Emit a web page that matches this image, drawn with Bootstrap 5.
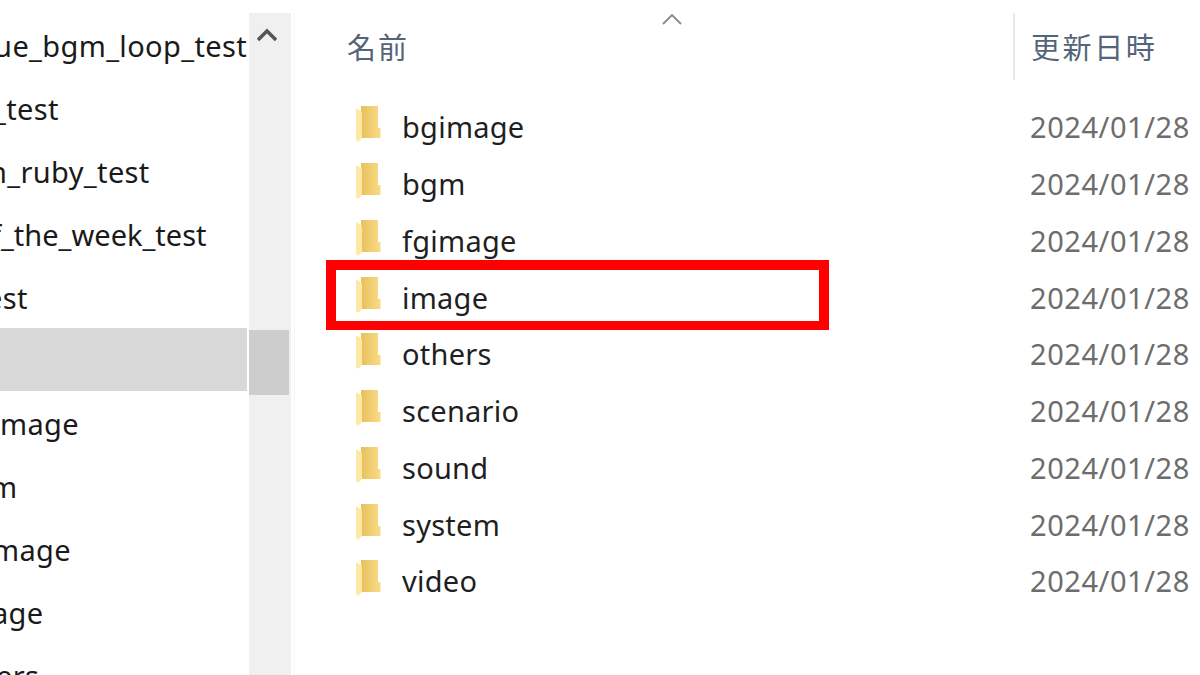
<!DOCTYPE html>
<html lang="ja">
<head>
<meta charset="utf-8">
<title>Explorer</title>
<link href="https://cdn.jsdelivr.net/npm/bootstrap@5.3.0/dist/css/bootstrap.min.css" rel="stylesheet">
<style>
html,body{height:675px;overflow:hidden;background:#fff}
body{font-family:"Noto Sans","Noto Sans CJK JP",sans-serif}
.shell{height:675px}
.tree{width:247px;padding-top:13px;overflow:hidden;flex:none}
.tree-row{height:63px;line-height:65px;font-size:29px;letter-spacing:.35px;color:#1a1a1a;white-space:nowrap;display:flex;justify-content:flex-end}
.tree-row.left-cut{justify-content:flex-start}
.tree-row.picked{background:#d9d9d9}
.cut-1{margin-left:-7px}.cut-2{margin-left:-11px}.cut-3{margin-left:-9px;letter-spacing:0}.cut-4{margin-left:-14px}
.cut-5{margin-left:0}.cut-6{margin-left:-10px}.cut-7{margin-left:-8px}.cut-8{margin-left:-8px}.cut-9{margin-left:-4px}
.scroll-track{width:42px;margin:13px 0 0 2px;background:#f0f0f0;flex:none;position:relative;display:flex;flex-direction:column}
.scroll-arrow{height:47px;padding:15px 0 0 8px;line-height:0}
.scroll-thumb{width:40px;height:65px;margin-top:270px;background:#cdcdcd}
.pane-rule{width:1px;margin:13px 0 0 3px;background:#f7f7f7;flex:none}
.main-pane{flex:1;position:relative;min-width:0}
.head-row{height:67px;margin-top:13px;position:relative}
.col-name{width:718px;padding-left:52px;flex:none;font-size:29px;letter-spacing:2px;color:#54647a;line-height:70px}
.col-date{border-left:2px solid #e8e8e8;padding-left:16px;font-size:29px;letter-spacing:2.600px;color:#54647a;line-height:70px;white-space:nowrap}
.sort-mark{position:absolute;left:366px;top:-2px;line-height:0}
.file-list{padding-top:18.6px}
.file-row{height:56.75px;line-height:55px}
.file-main{width:735px;flex:none;padding-left:60px;gap:21px;font-size:29px;letter-spacing:.25px;color:#1f1f1f}
.file-date{font-size:29px;letter-spacing:.55px;color:#6d6d6d;white-space:nowrap}
.folder-ico{width:26px;height:37px;flex:none;margin-bottom:4px}
.red-box{position:absolute;left:31px;top:260px;width:503px;height:70px;border:solid #f00;border-width:10px 10px 9px 10px}
</style>
</head>
<body>
<div class="d-flex shell">
  <div class="tree">
    <div class="tree-row"><span>ue_bgm_loop_test</span></div>
    <div class="tree-row left-cut"><span class="cut-1">_test</span></div>
    <div class="tree-row left-cut"><span class="cut-2">n_ruby_test</span></div>
    <div class="tree-row left-cut"><span class="cut-3">f_the_week_test</span></div>
    <div class="tree-row left-cut"><span class="cut-4">est</span></div>
    <div class="tree-row picked"></div>
    <div class="tree-row left-cut"><span class="cut-5">mage</span></div>
    <div class="tree-row left-cut"><span class="cut-6">m</span></div>
    <div class="tree-row left-cut"><span class="cut-7">mage</span></div>
    <div class="tree-row left-cut"><span class="cut-8">age</span></div>
    <div class="tree-row left-cut"><span class="cut-9">ers</span></div>
  </div>
  <div class="scroll-track">
    <div class="scroll-arrow"><svg width="20" height="14" viewBox="0 0 20 14"><path d="M1 12 10 3l9 9" fill="none" stroke="#555" stroke-width="3.4"/></svg></div>
    <div class="scroll-thumb"></div>
  </div>
  <div class="pane-rule"></div>
  <div class="main-pane">
    <div class="head-row d-flex">
      <div class="col-name">名前</div>
      <div class="col-date">更新日時</div>
      <svg class="sort-mark" width="22" height="16" viewBox="0 0 22 16"><path d="M2 13 11 4l9 9" fill="none" stroke="#8a8a8a" stroke-width="1.8"/></svg>
    </div>
    <div class="file-list">
      <div class="file-row d-flex align-items-center"><div class="file-main d-flex align-items-center"><svg class="folder-ico" viewBox="0 0 26 37"><use href="#fold"/></svg><span>bgimage</span></div><div class="file-date">2024/01/28</div></div>
      <div class="file-row d-flex align-items-center"><div class="file-main d-flex align-items-center"><svg class="folder-ico" viewBox="0 0 26 37"><use href="#fold"/></svg><span>bgm</span></div><div class="file-date">2024/01/28</div></div>
      <div class="file-row d-flex align-items-center"><div class="file-main d-flex align-items-center"><svg class="folder-ico" viewBox="0 0 26 37"><use href="#fold"/></svg><span>fgimage</span></div><div class="file-date">2024/01/28</div></div>
      <div class="file-row d-flex align-items-center"><div class="file-main d-flex align-items-center"><svg class="folder-ico" viewBox="0 0 26 37"><use href="#fold"/></svg><span>image</span></div><div class="file-date">2024/01/28</div></div>
      <div class="file-row d-flex align-items-center"><div class="file-main d-flex align-items-center"><svg class="folder-ico" viewBox="0 0 26 37"><use href="#fold"/></svg><span>others</span></div><div class="file-date">2024/01/28</div></div>
      <div class="file-row d-flex align-items-center"><div class="file-main d-flex align-items-center"><svg class="folder-ico" viewBox="0 0 26 37"><use href="#fold"/></svg><span>scenario</span></div><div class="file-date">2024/01/28</div></div>
      <div class="file-row d-flex align-items-center"><div class="file-main d-flex align-items-center"><svg class="folder-ico" viewBox="0 0 26 37"><use href="#fold"/></svg><span>sound</span></div><div class="file-date">2024/01/28</div></div>
      <div class="file-row d-flex align-items-center"><div class="file-main d-flex align-items-center"><svg class="folder-ico" viewBox="0 0 26 37"><use href="#fold"/></svg><span>system</span></div><div class="file-date">2024/01/28</div></div>
      <div class="file-row d-flex align-items-center"><div class="file-main d-flex align-items-center"><svg class="folder-ico" viewBox="0 0 26 37"><use href="#fold"/></svg><span>video</span></div><div class="file-date">2024/01/28</div></div>
    </div>
    <div class="red-box"></div>
  </div>
</div>
<svg width="0" height="0" class="d-block" aria-hidden="true"><defs>
  <linearGradient id="fg" x1="0" y1="0.5" x2="1" y2="0.5"><stop offset="0.2" stop-color="#e8c05c"/><stop offset="1" stop-color="#f9dc86"/></linearGradient>
  <symbol id="fold" viewBox="0 0 26 37"><path d="M1 0h22v22h2.500v10H6V0z" fill="url(#fg)"/><path d="M1 2 7 6v26l-4 4-2-2z" fill="#fde9a5"/></symbol>
</defs></svg>
<script src="https://cdn.jsdelivr.net/npm/bootstrap@5.3.0/dist/js/bootstrap.bundle.min.js"></script>
</body>
</html>
